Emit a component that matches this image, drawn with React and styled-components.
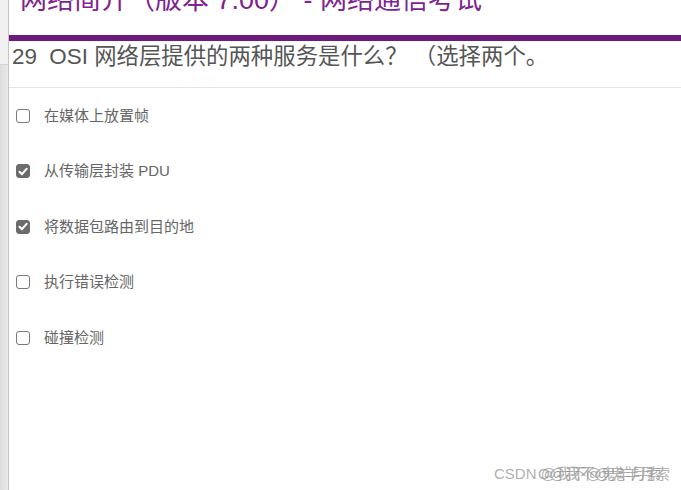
import React from "react";
import styled, { createGlobalStyle } from "styled-components";

const Global = createGlobalStyle`
  html, body { margin: 0; padding: 0; background: #fff; }
  body { font-family: "Liberation Sans", "Noto Sans CJK SC", Arial, sans-serif; overflow: hidden; }
  #root { height: 100vh; }
`;

const Page = styled.div`
  display: flex;
  height: 100vh;
  overflow: hidden;
  position: relative;
`;

const Sidebar = styled.div`
  width: 8px;
  flex: none;
  display: flex;
  flex-direction: column;
  border-right: 1px solid #c4c4c4;
`;

const SideTop = styled.div`
  height: 64px;
  background: #f1f1f1;
  border-bottom: 1px solid #d6d6d6;
`;

const SideBottom = styled.div`
  flex: 1;
  background: linear-gradient(to right, #dcdcdc, #e9e9e9);
`;

const Main = styled.main`
  flex: 1;
  display: flex;
  flex-direction: column;
  min-width: 0;
`;

const Header = styled.header`
  height: 35px;
  overflow: hidden;
  padding-left: 11px;
  border-bottom: 6px solid #6d1a7d;
`;

const Title = styled.h1`
  margin: -13px 0 0;
  font-size: 27px;
  line-height: 27px;
  font-weight: normal;
  color: #80238f;
  white-space: nowrap;
`;

const Question = styled.h2`
  margin: 2px 0 0;
  padding: 0 0 16px 3px;
  font-size: 22.4px;
  line-height: 28px;
  font-weight: normal;
  color: #555;
  white-space: pre;
  border-bottom: 1px solid #e6e6e6;
`;

const Options = styled.ul`
  list-style: none;
  margin: 0;
  padding: 0 0 0 7px;
`;

const Option = styled.li`
  height: 55.5px;
  display: flex;
  align-items: center;
  gap: 14px;
`;

const Box = styled.span`
  width: 14px;
  height: 14px;
  box-sizing: border-box;
  border-radius: 3px;
  border: 1px solid ${(p) => (p.$checked ? "#6b6b6b" : "#7a7a7a")};
  background: ${(p) => (p.$checked ? "#6b6b6b" : "#fff")};
  display: flex;
  align-items: center;
  justify-content: center;
  flex: none;
`;

const Label = styled.span`
  font-size: 15px;
  color: #666;
  line-height: 20px;
`;

const Watermark = styled.div`
  position: absolute;
  right: 12px;
  bottom: 10px;
  width: 175px;
  height: 18px;
  font-size: 15px;
  color: rgba(140, 140, 140, 0.7);
  white-space: nowrap;
`;

const Mark = styled.span`
  position: absolute;
  top: 0;
  left: ${(p) => p.$left}px;
`;

const options = [
  { text: "在媒体上放置帧", checked: false },
  { text: "从传输层封装 PDU", checked: true },
  { text: "将数据包路由到目的地", checked: true },
  { text: "执行错误检测", checked: false },
  { text: "碰撞检测", checked: false },
];

function Check() {
  return (
    <svg width="10" height="9" viewBox="0 0 10 9">
      <path d="M1.5 4.8 L4 7.2 L8.6 1.8" fill="none" stroke="#fff" strokeWidth="2" strokeLinecap="round" strokeLinejoin="round" />
    </svg>
  );
}

export default function App() {
  return (
    <Page>
      <Global />
      <Sidebar>
        <SideTop />
        <SideBottom />
      </Sidebar>
      <Main>
        <Header>
          <Title>网络简介（版本 7.00） - 网络通信考试</Title>
        </Header>
        <Question>{"29  OSI 网络层提供的两种服务是什么？ （选择两个。"}</Question>
        <Options>
          {options.map((o) => (
            <Option key={o.text}>
              <Box $checked={o.checked}>{o.checked && <Check />}</Box>
              <Label>{o.text}</Label>
            </Option>
          ))}
        </Options>
      </Main>
      <Watermark>
        <Mark $left={0}>CSDN @我不@鬼羊月索</Mark>
        <Mark $left={44}>O@我不@鬼羊月索</Mark>
      </Watermark>
    </Page>
  );
}
